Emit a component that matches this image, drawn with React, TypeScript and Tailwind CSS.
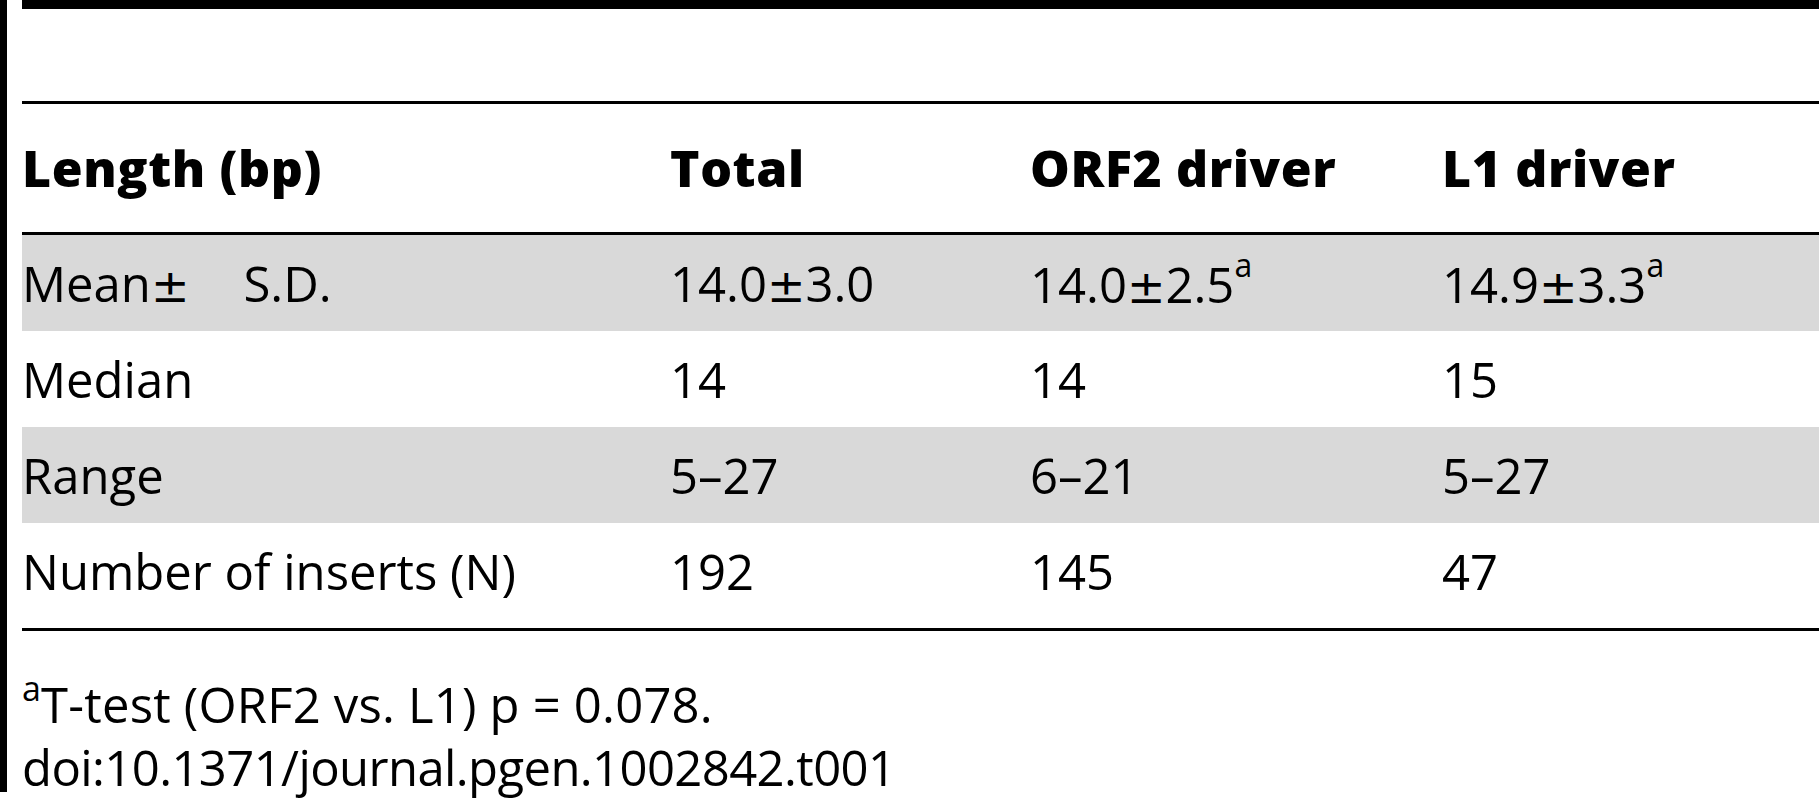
const Pm = () => (
  <span style={{ fontFamily: '"DejaVu Sans", sans-serif' }} className="text-[46px]">
    {'\u00b1'}
  </span>
)

const Sup = () => (
  <sup className="text-[32px] leading-none align-[26px] top-0">a</sup>
)

const rows = [
  {
    label: (
      <>
        Mean
        <Pm />
        <span className="ml-[54px]">S.D.</span>
      </>
    ),
    total: <>14.0<Pm />3.0</>,
    orf2: <>14.0<Pm />2.5<Sup /></>,
    l1: <>14.9<Pm />3.3<Sup /></>,
    gray: true,
  },
  { label: 'Median', total: '14', orf2: '14', l1: '15', gray: false },
  { label: 'Range', total: '5\u201327', orf2: '6\u201321', l1: '5\u201327', gray: true },
  { label: 'Number of inserts (N)', total: '192', orf2: '145', l1: '47', gray: false },
]

export default function App() {
  return (
    <div
      className="flex w-[1819px] h-[800px] bg-white text-black text-[49px] leading-[68px]"
      style={{ fontFamily: '"Open Sans", "Noto Sans", sans-serif' }}
    >
      <div className="w-[7px] h-[792px] bg-black shrink-0" />
      <div className="flex-1 ml-[15px] flex flex-col">
        <div className="h-[9px] bg-black" />
        <div className="h-[92px]" />
        <div className="h-[3px] bg-black" />
        <div className="grid grid-cols-[648px_360px_412px_1fr] h-[128px] pt-[30px] text-[50px] font-extrabold tracking-[0.6px]">
          <div>Length (bp)</div>
          <div>Total</div>
          <div>ORF2 driver</div>
          <div>L1 driver</div>
        </div>
        <div className="h-[3px] bg-black" />
        {rows.map((r, i) => (
          <div
            key={i}
            className={
              'grid grid-cols-[648px_360px_412px_1fr] pt-[14px] ' +
              (i === rows.length - 1 ? 'h-[105px] ' : 'h-[96px] ') +
              (r.gray ? 'bg-[#d9d9d9]' : 'bg-white')
            }
          >
            <div className="whitespace-nowrap">{r.label}</div>
            <div className="whitespace-nowrap">{r.total}</div>
            <div className="whitespace-nowrap">{r.orf2}</div>
            <div className="whitespace-nowrap">{r.l1}</div>
          </div>
        ))}
        <div className="h-[3px] bg-black" />
        <div className="mt-[40px] leading-[63px] whitespace-nowrap">
          <div className="tracking-[0.2px]">
            <span className="text-[34px] align-[22px] leading-none">a</span>
            T-test (ORF2 vs. L1) p = 0.078.
          </div>
          <div className="tracking-[-0.6px]">doi:10.1371/journal.pgen.1002842.t001</div>
        </div>
      </div>
    </div>
  )
}
